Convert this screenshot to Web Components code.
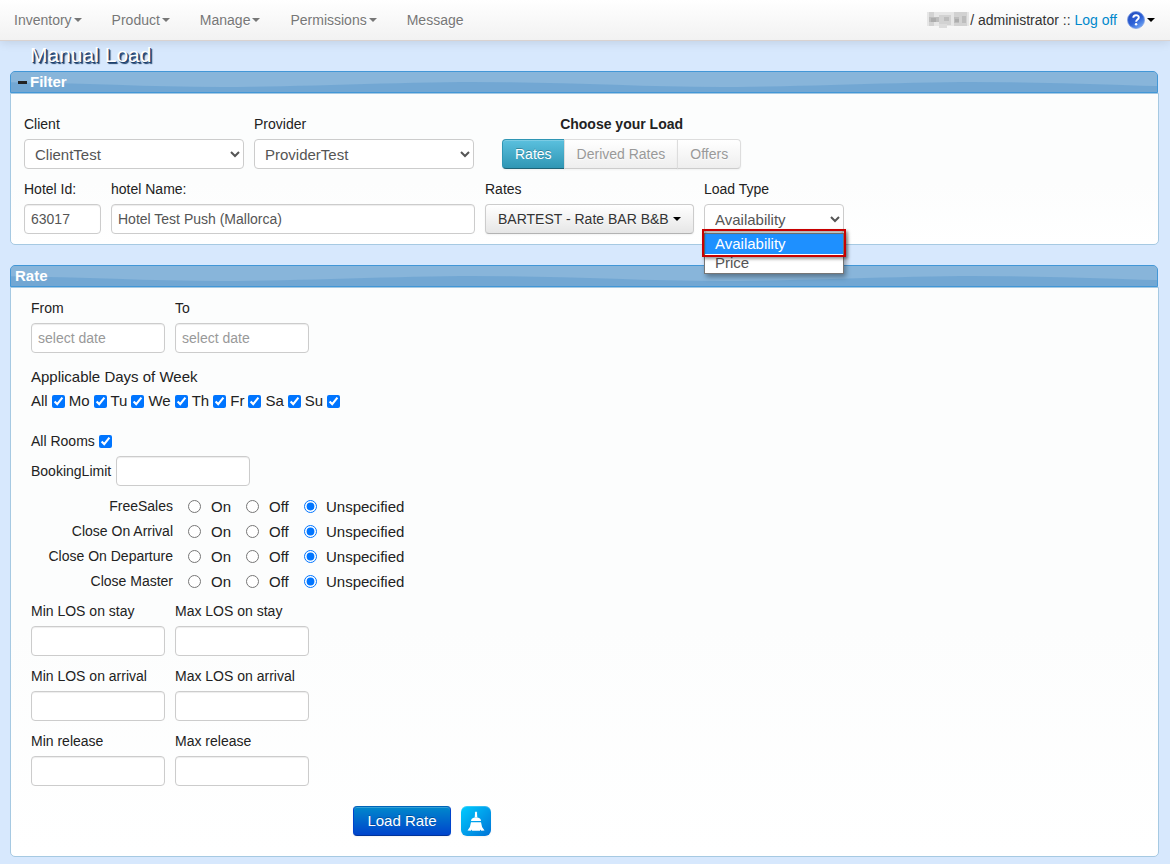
<!DOCTYPE html>
<html lang="en">
<head>
<meta charset="utf-8">
<title>Manual Load</title>
<style>
body { margin: 0; background: #d7e8fd; color: #222; font: 14px/20px "Liberation Sans", Arial, sans-serif; }
h1 { margin: 0; padding: 2px 30px 0; font-size: 21px; line-height: 24px; font-weight: 400; color: #fff; text-shadow: 1px 1px 0 #1c3f6b, 2px 2px 1px #1c3f6b; }
main { padding: 4px 11px 7px 10px; display: grid; gap: 20px; }
</style>
</head>
<body>
<app-navbar>
  <nav-item caret>Inventory</nav-item>
  <nav-item caret>Product</nav-item>
  <nav-item caret>Manage</nav-item>
  <nav-item caret>Permissions</nav-item>
  <nav-item>Message</nav-item>
</app-navbar>
<h1>Manual Load</h1>
<main>
  <panel-box heading="Filter" collapsible><filter-form></filter-form></panel-box>
  <panel-box heading="Rate"><rate-form></rate-form></panel-box>
</main>

<script>
const define = (name, html, setup) => {
  const template = document.createElement('template');
  template.innerHTML = '<style>*{box-sizing:border-box}</style>' + html;
  customElements.define(name, class extends HTMLElement {
    connectedCallback() {
      if (this.shadowRoot) return;
      const root = this.attachShadow({ mode: 'open' });
      root.append(template.content.cloneNode(true));
      if (setup) setup(this, root);
    }
  });
};

define('nav-item', `
<style>
:host { display: block; }
a { display: flex; align-items: center; gap: 2px; color: #777; text-decoration: none; padding: 10px 15px; text-shadow: 0 1px 0 #fff; }
i { display: none; border: 4px solid transparent; border-top-color: #777; border-bottom: 0; }
:host([caret]) i { display: block; }
</style>
<a href="#"><slot></slot><i></i></a>`);

define('app-navbar', `
<style>
:host { display: flex; justify-content: space-between; align-items: center; height: 41px; box-sizing: border-box; background: linear-gradient(#fff, #f2f2f2); border-bottom: 1px solid #d9d2d0; box-shadow: 0 1px 10px rgba(0,0,0,.12); }
nav { display: flex; margin-left: -1px; }
.user { display: flex; align-items: center; color: #333; padding-right: 15px; white-space: pre; }
.user a { color: #0088cc; text-decoration: none; }
.mask { margin-right: 1px; }
button { display: flex; align-items: center; border: 0; padding: 0; margin-left: 10px; background: none; }
i { border: 4px solid transparent; border-top-color: #000; border-bottom: 0; margin-left: 2px; }
</style>
<nav><slot></slot></nav>
<div class="user"><svg class="mask" width="42" height="16" viewBox="0 0 42 16" shape-rendering="crispEdges" aria-hidden="true">
<path fill="#e6e6e6" d="M0 0h42v14H0z"/><path fill="#d2d2d2" d="M2 0h5v14H2zM12 3h12v10H12zM27 0h13v14H27z"/><path fill="#bdbdbd" d="M2 5h10v5H2zM17 5h5v4h-5zM27 5h5v6h-5zM35 4h4v7h-4z"/><path fill="#adadad" d="M4 6h5v4H4zM28 7h4v3h-4z"/><path fill="#dcdcdc" d="M12 12h8v4h-8z"/></svg><span>/ administrator :: </span><a href="#">Log off</a>
<button aria-label="Help"><svg width="18" height="18" viewBox="0 0 18 18"><defs><linearGradient id="g" x2=".7" y2="1"><stop stop-color="#2348b8"/><stop offset=".6" stop-color="#2c60d6"/><stop offset="1" stop-color="#6fa4f4"/></linearGradient></defs><circle cx="9" cy="9" r="8.5" fill="url(#g)" stroke="#7c9ee4" stroke-width=".8"/><path d="M6.3 6.8C6.3 3.4 11.8 3.4 11.8 6.6C11.8 8.6 9.2 8.5 9.1 10.8" fill="none" stroke="#fff" stroke-width="1.9"/><circle cx="9.1" cy="13.3" r="1.2" fill="#fff"/></svg><i></i></button></div>`);

define('panel-box', `
<style>
:host { display: block; }
header { position: relative; height: 22px; overflow: hidden; display: flex; align-items: center; border: 1px solid #4297d7; border-radius: 5px 5px 0 0; background: #72a7d3; color: #fff; padding: 0 4px; margin-right: 1px; }
.wave { position: absolute; inset: 0; width: 100%; height: 100%; }
h2 { position: relative; margin: 0; font-size: 15px; line-height: 20px; font-weight: 700; }
button { position: relative; display: none; width: 9px; height: 3px; margin: 0 3px; padding: 0; border: 0; background: #222; }
:host([collapsible]) button { display: block; }
section { border: 1px solid #a6c9e2; border-radius: 0 0 5px 5px; background: linear-gradient(#fcfdfd 60%, #fff); }
</style>
<header><svg class="wave" aria-hidden="true"><defs><pattern id="w" width="500" height="22" patternUnits="userSpaceOnUse"><path d="M0 0H500V10.300Q480 10 462 10C390 10 282 15 212 15C140 15 70 11 0 10.300Z" fill="#88b5da"/></pattern></defs><rect width="100%" height="100%" fill="url(#w)"/></svg>
<button aria-label="Collapse"></button><h2></h2></header>
<section><slot></slot></section>`, (el, root) => {
  root.querySelector('h2').textContent = el.getAttribute('heading');
});

const control = `
label { display: block; line-height: 20px; margin-bottom: 5px; }
input, select { display: block; width: 100%; height: 30px; margin: 0; border: 1px solid #ccc; border-radius: 4px; background: #fff; color: #555; padding: 4px 6px; font: 14px/20px "Liberation Sans", Arial, sans-serif; }
input { box-shadow: inset 0 1px 1px rgba(0,0,0,.075); }
select { font-size: 15px; }
input::placeholder { color: #999; opacity: 1; }`;

define('text-field', `
<style>
:host { display: block; }
${control}
:host([inline]) { display: flex; align-items: center; gap: 5px; }
:host([inline]) label { margin: 0; }
:host([inline]) input { width: 134px; }
</style>
<label for="f"></label><input id="f" type="text">`, (el, root) => {
  const input = root.querySelector('input');
  root.querySelector('label').textContent = el.getAttribute('label');
  input.value = el.getAttribute('value') || '';
  input.placeholder = el.getAttribute('placeholder') || '';
});

define('select-field', `
<style>
:host { display: block; position: relative; }
${control}
ul { position: absolute; z-index: 5; left: 0; right: 0; top: 54px; margin: 0; padding: 0; list-style: none; border: 1px solid #767676; background: #fff; color: #555; font-size: 15px; line-height: 20px; box-shadow: 2px 3px 5px rgba(0,0,0,.35); }
li { padding: 0 10px; }
li:last-child { height: 19px; line-height: 18px; }
li.on { background: #1e90ff; color: #fff; }
.mark { position: absolute; z-index: 6; left: -2px; right: -2px; top: 50px; height: 28px; border: 2px solid #c80000; box-shadow: 2px 2px 3px rgba(0,0,0,.4), inset 1px 2px 2px rgba(0,0,0,.3); pointer-events: none; }
</style>
<label for="f"></label><select id="f"></select>`, (el, root) => {
  const select = root.querySelector('select');
  const options = el.getAttribute('options').split(',');
  root.querySelector('label').textContent = el.getAttribute('label');
  options.forEach(text => select.add(new Option(text)));
  if (el.hasAttribute('open')) {
    const list = document.createElement('ul');
    options.forEach((text, i) => {
      const item = document.createElement('li');
      item.textContent = text;
      if (!i) item.className = 'on';
      list.append(item);
    });
    const mark = document.createElement('div');
    mark.className = 'mark';
    root.append(list, mark);
  }
});

const button = `
button { height: 30px; padding: 4px 12px; border: 1px solid #ccc; border-bottom-color: #b3b3b3; border-radius: 4px; background: linear-gradient(#fff, #e6e6e6); color: #333; font: 14px/20px "Liberation Sans", Arial, sans-serif; white-space: nowrap; text-shadow: 0 1px 1px rgba(255,255,255,.75); box-shadow: inset 0 1px 0 rgba(255,255,255,.2), 0 1px 2px rgba(0,0,0,.05); }`;

define('load-switch', `
<style>
:host { display: block; text-align: center; }
${button}
b { display: block; margin-bottom: 5px; }
div { display: flex; }
button { border-radius: 0; color: #999; border-color: #ddd; border-bottom-color: #ccc; background: linear-gradient(#fff, #eee); margin-left: -1px; }
button:first-child { margin: 0; border-radius: 4px 0 0 4px; }
button:last-child { border-radius: 0 4px 4px 0; }
button.on { color: #fff; border-color: #2f96b4 #2f96b4 #1f6377; background: linear-gradient(#5bc0de, #2f96b4); text-shadow: 0 -1px 0 rgba(0,0,0,.25); }
</style>
<b id="t">Choose your Load</b>
<div role="group" aria-labelledby="t"><button class="on">Rates</button><button disabled>Derived Rates</button><button disabled>Offers</button></div>`);

define('menu-button', `
<style>
:host { display: block; }
${button}
label { display: block; margin-bottom: 5px; }
button { display: flex; align-items: center; justify-content: space-between; width: 100%; }
i { border: 4px solid transparent; border-top-color: #000; border-bottom: 0; }
</style>
<label for="b">Rates</label><button id="b"><slot></slot><i></i></button>`);

define('filter-form', `
<style>
:host { display: grid; gap: 10px; padding: 20px 13px 10px; }
.row { display: flex; gap: 10px; }
.w220 { width: 220px; } .w77 { width: 77px; } .w364 { width: 364px; } .w209 { width: 209px; } .w140 { width: 140px; }
load-switch { margin-left: 18px; }
</style>
<div class="row"><select-field class="w220" label="Client" options="ClientTest"></select-field><select-field class="w220" label="Provider" options="ProviderTest"></select-field><load-switch></load-switch></div>
<div class="row"><text-field class="w77" label="Hotel Id:" value="63017"></text-field><text-field class="w364" label="hotel Name:" value="Hotel Test Push (Mallorca)"></text-field><menu-button class="w209">BARTEST - Rate BAR B&amp;B</menu-button><select-field class="w140" label="Load Type" options="Availability,Price" open></select-field></div>`);

define('check-box', `
<style>
:host { display: block; }
label { display: flex; align-items: center; gap: 4px; }
input { width: 13px; height: 13px; margin: 0; accent-color: #0075ff; }
</style>
<label><slot></slot><input type="checkbox" checked></label>`);

define('radio-row', `
<style>
:host { display: grid; grid-template-columns: 142px 58px 58px auto; height: 25px; align-items: center; font-size: 15px; }
.name { font-size: 14px; text-align: right; padding-bottom: 1px; }
label { display: flex; align-items: center; gap: 10px; margin-left: 15px; white-space: nowrap; }
label:last-child { gap: 9px; }
input { width: 13px; height: 13px; margin: 0; accent-color: #0075ff; }
</style>
<span class="name" id="n"><slot></slot></span>
<label><input type="radio" name="r">On</label><label><input type="radio" name="r">Off</label><label><input type="radio" name="r" checked>Unspecified</label>`);

define('rate-form', `
<style>
:host { display: block; padding: 10px 20px 20px; }
${button}
.pair { display: grid; grid-template-columns: 134px 134px; gap: 10px; }
.days { margin-top: 14px; font-size: 15px; line-height: 20px; }
.week { display: flex; gap: 4px; padding-top: 4px; }
.rooms { margin: 20px 0 5px; }
.flags { margin: 8px 0 7px; }
.actions { display: flex; gap: 10px; margin: 20px 0 0 322px; }
.load { font-size: 15px; color: #fff; border-color: #0064b8 #0044cc #003399; background: linear-gradient(#0088cc, #0044cc); text-shadow: 0 -1px 0 rgba(0,0,0,.25); width: 98px; }
.clear { width: 30px; padding: 0; border: 0; border-radius: 6px; background: linear-gradient(135deg, #00ccff, #0072d6); }
.clear svg { display: block; }
</style>
<div class="pair"><text-field label="From" placeholder="select date"></text-field><text-field label="To" placeholder="select date"></text-field></div>
<div class="days">Applicable Days of Week
<div class="week"><check-box>All</check-box><check-box>Mo</check-box><check-box>Tu</check-box><check-box>We</check-box><check-box>Th</check-box><check-box>Fr</check-box><check-box>Sa</check-box><check-box>Su</check-box></div></div>
<check-box class="rooms">All Rooms</check-box>
<text-field label="BookingLimit" inline></text-field>
<div class="flags"><radio-row>FreeSales</radio-row><radio-row>Close On Arrival</radio-row><radio-row>Close On Departure</radio-row><radio-row>Close Master</radio-row></div>
<div class="pair"><text-field label="Min LOS on stay"></text-field><text-field label="Max LOS on stay"></text-field><text-field label="Min LOS on arrival"></text-field><text-field label="Max LOS on arrival"></text-field><text-field label="Min release"></text-field><text-field label="Max release"></text-field></div>
<div class="actions"><button class="load">Load Rate</button><button class="clear" aria-label="Clear"><svg width="30" height="30" viewBox="0 0 30 30" fill="#fff"><path d="M14 6.500q1-2 2 0l.3 5h-2.600z"/><path d="M10 15q0-3 3.500-3.500h3q3.500.500 3.500 3.500z"/><path d="M10 16.200h10q.300 4.800 3.500 8.300l-3.200.3-1-1.200-.3 1.200h-8l-.3-1.200-1 1.200-3.200-.3q3.200-3.500 3.500-8.300z"/></svg></button></div>`);
</script>
</body>
</html>
